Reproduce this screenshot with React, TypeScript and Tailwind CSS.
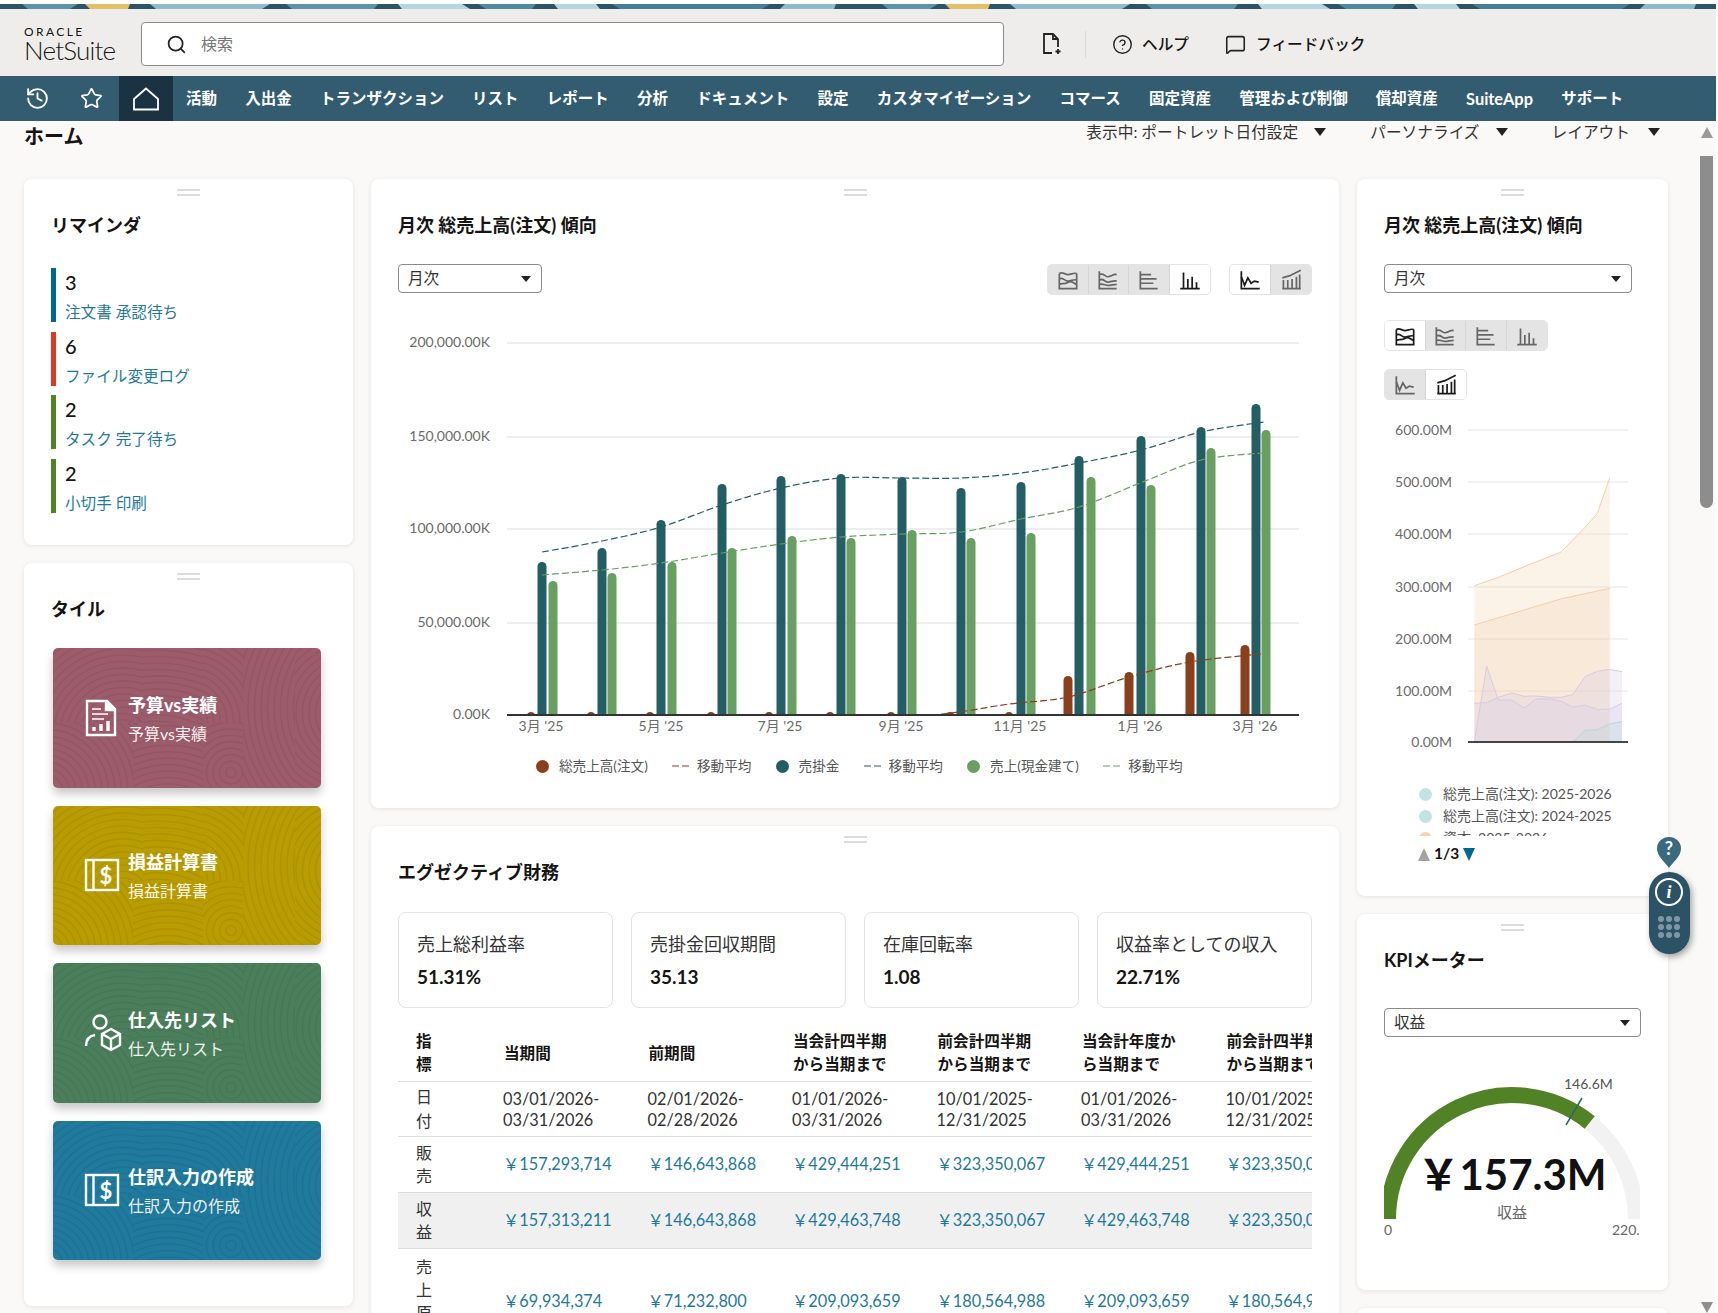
import { CircleHelp, History, MessageSquare, Search, Star } from "lucide-react";
import type { ReactNode } from "react";

const yen = "\uFFE5";

const navLabels = ["活動", "入出金", "トランザクション", "リスト", "レポート", "分析", "ドキュメント", "設定", "カスタマイゼーション", "コマース", "固定資産", "管理および制御", "償却資産", "SuiteApp", "サポート"];

const reminders = [
  { count: "3", label: "注文書 承認待ち", bar: "bg-[#00688c]" },
  { count: "6", label: "ファイル変更ログ", bar: "bg-[#d63d27]" },
  { count: "2", label: "タスク 完了待ち", bar: "bg-[#508226]" },
  { count: "2", label: "小切手 印刷", bar: "bg-[#508226]" },
];

const stats = [
  { label: "売上総利益率", value: "51.31%" },
  { label: "売掛金回収期間", value: "35.13" },
  { label: "在庫回転率", value: "1.08" },
  { label: "収益率としての収入", value: "22.71%" },
];

const tableHead = ["当期間", "前期間", "当会計四半期から当期まで", "前会計四半期から当期まで", "当会計年度から当期まで", "前会計四半期から当期まで"];
const dateRow = [
  ["03/01/2026-", "03/31/2026"],
  ["02/01/2026-", "02/28/2026"],
  ["01/01/2026-", "03/31/2026"],
  ["10/01/2025-", "12/31/2025"],
  ["01/01/2026-", "03/31/2026"],
  ["10/01/2025-", "12/31/2025"],
];
const moneyRows = [
  { name: "販売", h: "h-[56px]", bg: "", values: ["157,293,714", "146,643,868", "429,444,251", "323,350,067", "429,444,251", "323,350,067"] },
  { name: "収益", h: "h-[56px]", bg: "bg-[#f0f0f0]", values: ["157,313,211", "146,643,868", "429,463,748", "323,350,067", "429,463,748", "323,350,067"] },
  { name: "売上原価", h: "h-[106px]", bg: "", values: ["69,934,374", "71,232,800", "209,093,659", "180,564,988", "209,093,659", "180,564,988"] },
];

// bar centre x and top y, read off the reference
const darkBars = [[542, 562], [602, 548], [661, 520], [722, 484], [781, 476], [841, 474], [902, 477], [961, 488], [1021, 482], [1079, 456], [1141, 436], [1201, 427], [1256, 404]];
const lightBars = [[553, 581], [612, 573], [672, 562], [732, 548], [792, 536], [851, 538], [912, 530], [971, 538], [1031, 533], [1091, 477], [1151, 485], [1211, 448], [1266, 430]];
const brownBars = [[531, 712], [591, 712], [650, 712], [711, 712], [769, 712], [830, 712], [891, 712], [950, 712], [1009, 712], [1068, 676], [1129, 672], [1190, 652], [1245, 645]];
const darkAvg = [[542, 552], [602, 541], [661, 527], [722, 505], [781, 488], [841, 478], [902, 478], [961, 478], [1021, 473], [1079, 463], [1141, 450], [1201, 432], [1264, 422]];
const lightAvg = [[542, 575], [602, 570], [661, 563], [722, 553], [781, 544], [841, 537], [902, 534], [961, 532], [1021, 519], [1079, 507], [1145, 481], [1201, 460], [1262, 453]];
const brownAvg = [[531, 715], [891, 715], [950, 713], [1009, 704], [1068, 697], [1129, 677], [1190, 662], [1261, 654]];

const grid = [
  { y: 343, label: "200,000.00K" },
  { y: 437, label: "150,000.00K" },
  { y: 529, label: "100,000.00K" },
  { y: 623, label: "50,000.00K" },
  { y: 715, label: "0.00K" },
];
const xLabels = [[541, "3月 '25"], [661, "5月 '25"], [780, "7月 '25"], [901, "9月 '25"], [1020, "11月 '25"], [1140, "1月 '26"], [1255, "3月 '26"]] as const;

const sideGrid = [
  { y: 431, label: "600.00M" },
  { y: 483, label: "500.00M" },
  { y: 535, label: "400.00M" },
  { y: 588, label: "300.00M" },
  { y: 640, label: "200.00M" },
  { y: 692, label: "100.00M" },
  { y: 743, label: "0.00M" },
];

// side chart points as zoomed crop coords, converted below
const toSide = (pts: number[][]) => pts.map(([x, y]) => `${1350 + x / 3},${410 + y / 3}`).join(" ");
const sideSeries = [
  { pts: [[373, 530], [445, 505], [555, 460], [632, 430], [705, 355], [742, 313], [779, 207]], end: 779, fill: "#f3d5b3", stroke: "#f2cfa8" },
  { pts: [[373, 648], [632, 570], [779, 538]], end: 779, fill: "#f3d5b3", stroke: "#f2cfa8" },
  { pts: [[373, 1000], [410, 772], [445, 873], [485, 873], [522, 897], [558, 870], [600, 870], [632, 876], [668, 894], [705, 888], [742, 902], [779, 900], [816, 883]], end: 816, fill: "#d8cde8", stroke: "#dcc9e2" },
  { pts: [[373, 883], [410, 881], [445, 865], [485, 852], [522, 862], [558, 861], [600, 865], [632, 865], [668, 857], [705, 803], [742, 787], [779, 781], [816, 788]], end: 816, fill: "#d8cde8", stroke: "#dcc9e2" },
  { pts: [[668, 1000], [705, 964], [742, 962], [779, 945], [816, 938]], end: 816, fill: "#bcdcdc", stroke: "#b5d8d6" },
];

const tiles = [
  { title: "予算vs実績", bg: "bg-[#9d5c6c]", icon: <DocChartIcon /> },
  { title: "損益計算書", bg: "bg-[#b99c00]", icon: <DollarBoxIcon /> },
  { title: "仕入先リスト", bg: "bg-[#4b7f5c]", icon: <VendorIcon /> },
  { title: "仕訳入力の作成", bg: "bg-[#1f7a9e]", icon: <DollarBoxIcon /> },
];

// regions of concentric lines used as the tile texture
const swirls = [
  { id: "a", x: 0, y: 0, w: 90, h: 75, cx: 70, cy: 90 },
  { id: "b", x: 90, y: 0, w: 60, h: 75, cx: 105, cy: 150 },
  { id: "c", x: 150, y: 0, w: 40, h: 75, cx: 130, cy: 75 },
  { id: "d", x: 190, y: 0, w: 52, h: 140, cx: 330, cy: 60 },
  { id: "e", x: 242, y: 0, w: 26, h: 140, cx: 300, cy: 65 },
  { id: "f", x: 0, y: 75, w: 80, h: 65, cx: -8, cy: 145 },
  { id: "g", x: 80, y: 75, w: 70, h: 65, cx: 115, cy: 200 },
  { id: "h", x: 150, y: 75, w: 40, h: 65, cx: 178, cy: 125 },
];
const rings = Array.from({ length: 32 }, (_, i) => 5 + i * 6.5);

function Swirl({ tile }: { tile: number }) {
  return (
    <svg className="absolute inset-0 h-full w-full" viewBox="0 0 268 140" preserveAspectRatio="none">
      <defs>
        {swirls.map((s) => (
          <clipPath id={`swirl-${tile}-${s.id}`} key={s.id}>
            <rect x={s.x} y={s.y} width={s.w} height={s.h} />
          </clipPath>
        ))}
      </defs>
      {swirls.map((s) => (
        <g key={s.id} clipPath={`url(#swirl-${tile}-${s.id})`} fill="none" stroke="#000" strokeOpacity="0.06" strokeWidth="1.6">
          {rings.map((r) => (
            <circle cx={s.cx} cy={s.cy} r={r} key={r} />
          ))}
        </g>
      ))}
    </svg>
  );
}

function DocChartIcon() {
  return (
    <svg className="ml-[1px]" width="32" height="38" viewBox="0 0 32 38" fill="none" stroke="#fff" strokeWidth="2.4">
      <path d="M2 2h20l8 8v26H2z" />
      <path d="M21 2v9h9" fill="#fff" />
      <path d="M7 10h9M7 15h16M7 20h12" strokeWidth="1.6" />
      <path d="M9 32v-4M16 32v-7M23 32V22" strokeWidth="3.4" />
    </svg>
  );
}

function DollarBoxIcon() {
  return (
    <svg width="36" height="34" viewBox="0 0 36 34" fill="none" stroke="#fff" strokeWidth="2.4">
      <rect x="2" y="2" width="32" height="30" />
      <path d="M9.5 2v30" />
      <text x="22" y="26" textAnchor="middle" fill="#fff" stroke="none" className="text-[22px] font-bold">
        $
      </text>
    </svg>
  );
}

function VendorIcon() {
  return (
    <svg width="38" height="38" viewBox="0 0 38 38" fill="none" stroke="#fff" strokeWidth="2.4">
      <circle cx="16" cy="8" r="6.5" />
      <path d="M2 32c0-6 3-10 9-11" />
      <path d="M27 15l9 5v11l-9 5-9-5V20z" />
      <path d="M18 20l9 5 9-5M27 25v11" />
    </svg>
  );
}

// chart type toggle icons
const toggleIcons: Record<string, ReactNode> = {
  area: (
    <>
      <path d="M4 6v14h16V6" />
      <path d="M4 6c3-2 5 1 8 1s5-2 8-1M4 11c3-2 5 2 8 2s5-2 8-1M4 16c3-1 5 0 8-2s5 1 8 2" />
    </>
  ),
  lines: (
    <>
      <path d="M4 4v16h16" />
      <path d="M4 7c4-2 5 2 8 2s5-3 8-2M4 12c4-2 5 2 8 2s5-2 8-1M4 16c4-1 5 1 8 1s5-1 8-1" />
    </>
  ),
  hbars: (
    <>
      <path d="M4 4v16h16" />
      <path d="M4 7h10M4 11h15M4 15h12" />
    </>
  ),
  vbars: (
    <>
      <path d="M3 20h18" />
      <path d="M6 20V5M10 20v-9M14 20V9M18 20v-6" />
    </>
  ),
  line: (
    <>
      <path d="M4 4v16h17" />
      <path d="M4 9l3 8 3-7 3 5 3-2 4 1" />
    </>
  ),
  combo: (
    <>
      <path d="M4 20h17" />
      <path d="M5 20v-8M9 20v-8M13 20v-9M17 20V9M20 20V7" />
      <path d="M4 10l7-2 4-2 6-3" />
    </>
  ),
};

function ToggleGroup({ items, active }: { items: string[]; active: string }) {
  return (
    <div className="flex h-[31px] overflow-hidden rounded-[5px] border border-[#e4e4e4] bg-[#e4e4e4]">
      {items.map((item) => (
        <div className={`flex w-[40.5px] items-center justify-center border-r border-[#d6d6d6] last:border-r-0 ${item === active ? "bg-white text-[#1c1c1c]" : "text-[#666]"}`} key={item}>
          <svg width="26" height="26" viewBox="0 0 24 24" fill="none" stroke="currentColor" strokeWidth="1.6">
            {toggleIcons[item]}
          </svg>
        </div>
      ))}
    </div>
  );
}

function Triangle({ className }: { className: string }) {
  return <span className={`inline-block h-0 w-0 border-x-[6px] border-x-transparent border-t-[8px] ${className}`} />;
}

function Select({ label, className }: { label: string; className: string }) {
  return (
    <div className={`flex h-[29px] items-center justify-between rounded-[4px] border border-[#8a8a8a] bg-white pr-[10px] pl-[9px] text-[15.6px] text-[#333] ${className}`}>
      <span>{label}</span>
      <span className="inline-block h-0 w-0 border-x-[5px] border-x-transparent border-t-[6px] border-t-[#222]" />
    </div>
  );
}

function Card({ className, children }: { className: string; children?: ReactNode }) {
  return (
    <section className={`shrink-0 rounded-lg bg-white shadow-[0_1px_5px_rgba(0,0,0,0.09)] ${className}`}>
      <div className="flex justify-center pt-[10px]">
        <div className="h-[7px] w-[23px] border-y-2 border-[#dcdcdc]" />
      </div>
      {children}
    </section>
  );
}

function CardTitle({ children }: { children: ReactNode }) {
  return <h2 className="mt-[17px] h-6 text-lg leading-6 font-bold text-[#161513]">{children}</h2>;
}

function smooth(pts: number[][]) {
  let d = `M${pts[0][0]} ${pts[0][1]}`;
  for (let i = 0; i < pts.length - 1; i++) {
    const p0 = pts[Math.max(i - 1, 0)];
    const p1 = pts[i];
    const p2 = pts[i + 1];
    const p3 = pts[Math.min(i + 2, pts.length - 1)];
    d += ` C${p1[0] + (p2[0] - p0[0]) / 6} ${p1[1] + (p2[1] - p0[1]) / 6} ${p2[0] - (p3[0] - p1[0]) / 6} ${p2[1] - (p3[1] - p1[1]) / 6} ${p2[0]} ${p2[1]}`;
  }
  return d;
}

function barPath([x, top]: number[], w: number) {
  const r = w / 2;
  return `M${x - r} 715V${top + r}A${r} ${r} 0 0 1 ${x + r} ${top + r}V715Z`;
}

function TrendChart() {
  return (
    <svg className="mt-[25px] block" width="968" height="425" viewBox="371 320 968 425">
      {grid.map((g) => (
        <g key={g.y}>
          <line x1="507" x2="1299" y1={g.y} y2={g.y} stroke="#e9e9e9" strokeWidth="1.5" />
          <text x="490" y={g.y + 4} textAnchor="end" className="fill-[#6b6b6b] text-[14px]">
            {g.label}
          </text>
        </g>
      ))}
      {brownBars.map((b) => (
        <path d={barPath(b, 9)} fill="#8a3f1d" key={b[0]} />
      ))}
      {darkBars.map((b) => (
        <path d={barPath(b, 9)} fill="#235e65" key={b[0]} />
      ))}
      {lightBars.map((b) => (
        <path d={barPath(b, 9)} fill="#6a9f62" key={b[0]} />
      ))}
      <path d={smooth(brownAvg)} fill="none" stroke="#8a3f1d" strokeWidth="1.2" strokeDasharray="7 3" />
      <path d={smooth(darkAvg)} fill="none" stroke="#235e65" strokeWidth="1.2" strokeDasharray="7 3" />
      <path d={smooth(lightAvg)} fill="none" stroke="#6a9f62" strokeWidth="1.2" strokeDasharray="7 3" />
      <line x1="507" x2="1299" y1="715" y2="715" stroke="#333" strokeWidth="2" />
      {xLabels.map(([x, label]) => (
        <text x={x} y="731" textAnchor="middle" className="fill-[#6b6b6b] text-[14px]" key={x}>
          {label}
        </text>
      ))}
    </svg>
  );
}

function SideChart() {
  return (
    <svg className="mt-[4px] block" width="311" height="375" viewBox="1357 405 311 375">
      {sideGrid.map((g) => (
        <g key={g.y}>
          <line x1="1468" x2="1628" y1={g.y} y2={g.y} stroke="#e6e6e6" strokeWidth="1.2" />
          <text x="1452" y={g.y + 5} textAnchor="end" className="fill-[#6b6b6b] text-[14px]">
            {g.label}
          </text>
        </g>
      ))}
      {sideSeries.map((s, i) => (
        <g key={i}>
          <polygon points={`${toSide(s.pts)} ${toSide([[s.end, 1000], [s.pts[0][0], 1000]])}`} fill={s.fill} fillOpacity="0.3" />
          <polyline points={toSide(s.pts)} fill="none" stroke={s.stroke} strokeWidth="1" />
        </g>
      ))}
      <line x1="1468" x2="1628" y1="743" y2="743" stroke="#111" strokeWidth="1.4" />
    </svg>
  );
}

function Gauge() {
  return (
    <svg className="mt-[12px] block" width="256" height="200" viewBox="1384 1050 256 200">
      <path d="M1589.7 1123.4A124 124 0 0 1 1636 1220" fill="none" stroke="#f2f2f2" strokeWidth="16" />
      <path d="M1388 1220A124 124 0 0 1 1589.7 1123.4" fill="none" stroke="#518226" strokeWidth="16" />
      <line x1="1566" y1="1126" x2="1582" y2="1099" stroke="#2b6a5e" strokeWidth="1.5" />
      <text x="1564" y="1090" className="fill-[#555] text-[14px]">
        146.6M
      </text>
      <text x="1512" y="1191" textAnchor="middle" className="fill-[#111] text-[42px] font-bold">
        {yen}157.3M
      </text>
      <text x="1512" y="1219" textAnchor="middle" className="fill-[#666] text-[15px]">
        収益
      </text>
      <text x="1384" y="1236" className="fill-[#666] text-[14px]">
        0
      </text>
      <text x="1612" y="1236" className="fill-[#666] text-[14px]">
        220.0M
      </text>
    </svg>
  );
}

function LegendItem({ color, label }: { color: string; label: string }) {
  return (
    <div className="flex items-center gap-[10px]">
      <span className={`h-[13px] w-[13px] rounded-full ${color}`} />
      <span>{label}</span>
    </div>
  );
}

function LegendDash({ color }: { color: string }) {
  return (
    <div className="flex items-center gap-[8px]">
      <svg width="17" height="2">
        <line x1="0" x2="17" y1="1" y2="1" stroke={color} strokeWidth="1.2" strokeDasharray="7 3" />
      </svg>
      <span>移動平均</span>
    </div>
  );
}

export default function App() {
  return (
    <div className="h-[1313px] w-[1718px] overflow-hidden bg-white pt-1 font-[family-name:Lato,'Noto_Sans_CJK_JP',sans-serif] text-[#161513]">
      <div className="relative flex h-[1309px] w-[1716px] flex-col">
        <svg className="block shrink-0" width="1716" height="5" viewBox="0 0 1716 5">
          <rect width="1716" height="5" fill="#2b5468" />
          {[0, 860].map((o) => (
            <g key={o} transform={`translate(${o} 0)`}>
              <polygon points="22,0 78,0 70,5 28,5" fill="#5a93aa" />
              <polygon points="85,0 130,0 128,5 90,5" fill="#e3bf6a" />
              <polygon points="150,0 270,0 262,5 156,5" fill="#90bccd" />
              <polygon points="286,0 378,0 374,5 292,5" fill="#5a93aa" />
              <polygon points="398,0 462,0 470,5 402,5" fill="#b5d5e2" />
              <polygon points="478,0 536,0 532,5 486,5" fill="#4f8aa3" />
              <polygon points="554,0 596,0 600,5 558,5" fill="#b5d5e2" />
              <polygon points="612,0 770,0 762,5 620,5" fill="#457e99" />
              <polygon points="785,0 836,0 834,5 780,5" fill="#8ebbcc" />
            </g>
          ))}
        </svg>

        <header className="flex h-[67px] shrink-0 items-center bg-[#efedeb] pt-[3px] pl-6">
          <div className="w-[117px] shrink-0 text-[#161513]">
            <div className="h-[11px] text-[12px] leading-[11px] tracking-[2.4px]">ORACLE</div>
            <div className="mt-[1px] h-[25px] text-[26px] leading-[25px] font-light tracking-[-0.8px]">NetSuite</div>
          </div>
          <div className="flex h-[44px] w-[863px] shrink-0 items-center rounded-[4px] border border-[#8a8a8a] bg-white pl-[24px] text-base text-[#777]">
            <Search size={21} strokeWidth={2} className="text-[#222]" />
            <span className="ml-[14px]">検索</span>
          </div>
          <svg className="ml-[38px]" width="20" height="22" viewBox="0 0 20 22" fill="none" stroke="#222" strokeWidth="1.8">
            <path d="M10 20H2V1h9l5 5v8" />
            <path d="M11 1v5h5" />
            <path d="M16 16v5M13.5 18.5h5" />
          </svg>
          <div className="ml-[23px] h-[27px] w-px bg-[#dcdad7]" />
          <CircleHelp size={21} strokeWidth={1.6} className="ml-[26px] text-[#222]" />
          <span className="mt-[2px] ml-[9px] text-[15.7px] font-medium">ヘルプ</span>
          <MessageSquare size={21} strokeWidth={1.8} className="ml-[36px] text-[#222]" />
          <span className="mt-[2px] ml-[10px] text-[15.7px] font-medium">フィードバック</span>
        </header>

        <nav className="flex h-[45px] shrink-0 items-center bg-[#335c71] pl-[25px] text-white">
          <History size={25} strokeWidth={1.8} />
          <Star size={23} strokeWidth={1.8} className="ml-[30px]" />
          <div className="ml-[16px] flex h-full w-[54px] items-center justify-center bg-[#1b3242]">
            <svg width="26" height="24" viewBox="0 0 26 24" fill="none" stroke="#fff" strokeWidth="1.8">
              <path d="M13 1.5L25 12v10.5H1V12z" />
            </svg>
          </div>
          <div className="ml-[13px] flex gap-[28.2px] pt-[2px] text-[15.5px] font-bold">
            {navLabels.map((label) => (
              <span className={label === "SuiteApp" ? "text-[16.4px]" : ""} key={label}>
                {label}
              </span>
            ))}
          </div>
        </nav>

        <div className="flex min-h-0 flex-1 bg-[#faf9f7]">
          <main className="w-[1700px] shrink-0 overflow-hidden pl-6">
            <div className="flex h-[58px] items-start justify-between pr-[40px]">
              <h1 className="mt-[3px] text-xl leading-6 font-bold">ホーム</h1>
              <div className="flex items-center gap-[44px] pt-[1px] text-[15.7px] leading-5 text-[#333]">
                <div className="flex items-center gap-[16px]">
                  <span>表示中: ポートレット日付設定</span>
                  <Triangle className="border-t-[#222]" />
                </div>
                <div className="flex items-center gap-[16px]">
                  <span>パーソナライズ</span>
                  <Triangle className="border-t-[#222]" />
                </div>
                <div className="flex items-center gap-[18px]">
                  <span>レイアウト</span>
                  <Triangle className="border-t-[#222]" />
                </div>
              </div>
            </div>

            <div className="flex items-start gap-[18px]">
              <div className="flex w-[329px] shrink-0 flex-col gap-[18px]">
                <Card className="h-[366px] px-[27px]">
                  <CardTitle>リマインダ</CardTitle>
                  <div className="mt-[31px] flex flex-col gap-[9.5px]">
                    {reminders.map((r) => (
                      <div className="flex h-[54px] gap-[9px]" key={r.label}>
                        <div className={`w-[5px] ${r.bar}`} />
                        <div>
                          <div className="h-7 text-xl leading-7 font-medium">{r.count}</div>
                          <div className="mt-[6px] h-5 text-[15.6px] leading-5 text-[#1f7a99]">{r.label}</div>
                        </div>
                      </div>
                    ))}
                  </div>
                </Card>

                <Card className="h-[743px] px-[27px]">
                  <CardTitle>タイル</CardTitle>
                  <div className="mt-[27px] ml-[2px] flex w-[268px] flex-col gap-[18px]">
                    {tiles.map((t, i) => (
                      <div className={`relative flex h-[139.5px] items-center overflow-hidden rounded-[5px] pl-[31px] text-white shadow-[0_6px_10px_rgba(0,0,0,0.22)] ${t.bg}`} key={t.title}>
                        <Swirl tile={i} />
                        <div className="relative flex w-[44px] shrink-0 justify-start">{t.icon}</div>
                        <div className="relative pt-[3px]">
                          <div className="h-6 text-lg leading-6 font-bold">{t.title}</div>
                          <div className="mt-[5px] h-6 text-base leading-6 opacity-90">{t.title}</div>
                        </div>
                      </div>
                    ))}
                  </div>
                </Card>
              </div>

              <div className="flex w-[968px] shrink-0 flex-col gap-[18px]">
                <Card className="h-[629px] px-[27px]">
                  <CardTitle>月次 総売上高(注文) 傾向</CardTitle>
                  <div className="mt-[27px] flex items-start">
                    <Select label="月次" className="w-[144px]" />
                    <div className="ml-auto flex gap-[18px]">
                      <ToggleGroup items={["area", "lines", "hbars", "vbars"]} active="vbars" />
                      <ToggleGroup items={["line", "combo"]} active="line" />
                    </div>
                  </div>
                  <div className="-mx-[27px]">
                    <TrendChart />
                  </div>
                  <div className="mt-[11px] ml-[138px] flex gap-[24.2px] text-[13.6px] leading-5 text-[#555]">
                    <LegendItem color="bg-[#8a3f1d]" label="総売上高(注文)" />
                    <LegendDash color="#8a3f1d" />
                    <LegendItem color="bg-[#235e65]" label="売掛金" />
                    <LegendDash color="#235e65" />
                    <LegendItem color="bg-[#6a9f62]" label="売上(現金建て)" />
                    <LegendDash color="#6a9f62" />
                  </div>
                </Card>

                <Card className="h-[520px] px-[27px]">
                  <CardTitle>エグゼクティブ財務</CardTitle>
                  <div className="mt-[28px] grid w-[914px] grid-cols-4 gap-[18px]">
                    {stats.map((s) => (
                      <div className="h-[96px] rounded-lg border border-[#e3e3e3] px-[18px] pt-[18px]" key={s.label}>
                        <div className="h-[26px] text-lg leading-[26px] text-[#333]">{s.label}</div>
                        <div className="mt-[8px] h-6 text-[19px] leading-6 font-bold">{s.value}</div>
                      </div>
                    ))}
                  </div>
                  <div className="mt-[18px] w-[914px] overflow-hidden">
                    <table className="w-[959px] table-fixed border-collapse text-[16.3px]">
                      <colgroup>
                        <col className="w-[92px]" />
                        {tableHead.map((_, i) => (
                          <col className="w-[144.5px]" key={i} />
                        ))}
                      </colgroup>
                      <thead>
                        <tr className="h-[55px] border-b border-[#dcdcdc] text-[15.6px] leading-[23px]">
                          <th className="pl-[18px] text-left font-bold">
                            <div className="w-4">指標</div>
                          </th>
                          {tableHead.map((h, i) => (
                            <th className="pr-[30px] pl-[14px] text-left font-bold" key={i}>
                              {h}
                            </th>
                          ))}
                        </tr>
                      </thead>
                      <tbody>
                        <tr className="h-[55px] border-b border-[#dcdcdc]">
                          <td className="pl-[18px] text-base leading-[24px] text-[#333]">
                            <div className="w-4">日付</div>
                          </td>
                          {dateRow.map(([from, to], i) => (
                            <td className="pl-[13px] align-top leading-[21px] whitespace-nowrap text-[#333]" key={i}>
                              <div className="pt-[6px]">{from}</div>
                              <div>{to}</div>
                            </td>
                          ))}
                        </tr>
                        {moneyRows.map((row) => (
                          <tr className={`border-b border-[#dcdcdc] ${row.h} ${row.bg}`} key={row.name}>
                            <td className="pl-[18px] text-base leading-[23px] text-[#333]">
                              <div className="w-4">{row.name}</div>
                            </td>
                            {row.values.map((v, i) => (
                              <td className="pl-[13px] whitespace-nowrap text-[#1f7a99]" key={i}>
                                {yen}
                                {v}
                              </td>
                            ))}
                          </tr>
                        ))}
                      </tbody>
                    </table>
                  </div>
                </Card>
              </div>

              <div className="flex w-[311px] shrink-0 flex-col gap-[18px]">
                <Card className="h-[717px] px-[27px]">
                  <CardTitle>月次 総売上高(注文) 傾向</CardTitle>
                  <Select label="月次" className="mt-[27px] w-[248px]" />
                  <div className="mt-[27px] w-fit">
                    <ToggleGroup items={["area", "lines", "hbars", "vbars"]} active="area" />
                  </div>
                  <div className="mt-[18px] w-fit">
                    <ToggleGroup items={["line", "combo"]} active="combo" />
                  </div>
                  <div className="-mx-[27px]">
                    <SideChart />
                  </div>
                  <div className="mt-[4px] ml-[35px] h-[53px] overflow-hidden text-[14px] leading-[22px] text-[#555]">
                    {[
                      { c: "bg-[#c2e3e1]", t: "総売上高(注文): 2025-2026" },
                      { c: "bg-[#c2e3e1]", t: "総売上高(注文): 2024-2025" },
                      { c: "bg-[#f4d3b0]", t: "資本: 2025-2026" },
                    ].map((l, i) => (
                      <div className="flex h-[22px] items-center gap-[11px]" key={i}>
                        <span className={`h-[13px] w-[13px] rounded-full ${l.c}`} />
                        <span>{l.t}</span>
                      </div>
                    ))}
                  </div>
                  <div className="mt-[10px] ml-[34px] flex h-[16px] items-center gap-[4px] text-[15.5px] font-bold">
                    <span className="h-0 w-0 border-x-[6.5px] border-b-[13px] border-x-transparent border-b-[#a3a3a3]" />
                    <span>1/3</span>
                    <span className="h-0 w-0 border-x-[6.5px] border-t-[13px] border-x-transparent border-t-[#00688c]" />
                  </div>
                </Card>

                <Card className="h-[376px] px-[27px]">
                  <CardTitle>KPIメーター</CardTitle>
                  <Select label="収益" className="mt-[36px] w-[257px]" />
                  <Gauge />
                </Card>

                <Card className="h-[40px]" />
              </div>
            </div>
          </main>

          <div className="flex w-[13px] shrink-0 flex-col items-center pt-[6px]">
            <span className="h-0 w-0 border-x-[6.5px] border-b-[11px] border-x-transparent border-b-[#9a9a9a]" />
            <div className="mt-[18px] h-[352px] w-[13px] rounded-b-full bg-[#8d8d8d]" />
            <span className="mt-auto h-0 w-0 border-x-[6.5px] border-t-[11px] border-x-transparent border-t-[#8d8d8d]" />
          </div>
        </div>

        <div className="absolute top-[833px] left-[1645px] flex w-[48px] flex-col items-center">
          <svg width="24" height="31" viewBox="0 0 24 31">
            <path d="M12 31C9 26 0 20 0 11.5a12 11.5 0 0 1 24 0C24 20 15 26 12 31z" fill="#3a6a80" />
            <text x="12" y="18" textAnchor="middle" className="fill-white text-[18px] font-bold">
              ?
            </text>
          </svg>
          <div className="mt-[4px] flex h-[82px] w-[41px] flex-col items-center rounded-full bg-[#2c5266] pt-[6px] shadow-[2px_3px_6px_rgba(0,0,0,0.35)]">
            <div className="flex h-[28px] w-[28px] items-center justify-center rounded-full border-2 border-white font-['Liberation_Serif',serif] text-[18px] font-bold text-white italic">i</div>
            <div className="mt-[10px] grid grid-cols-3 gap-[2.5px]">
              {Array.from({ length: 9 }, (_, i) => (
                <span className="h-[5.5px] w-[5.5px] rounded-full bg-[#7f98a5]" key={i} />
              ))}
            </div>
          </div>
        </div>
      </div>
    </div>
  );
}
